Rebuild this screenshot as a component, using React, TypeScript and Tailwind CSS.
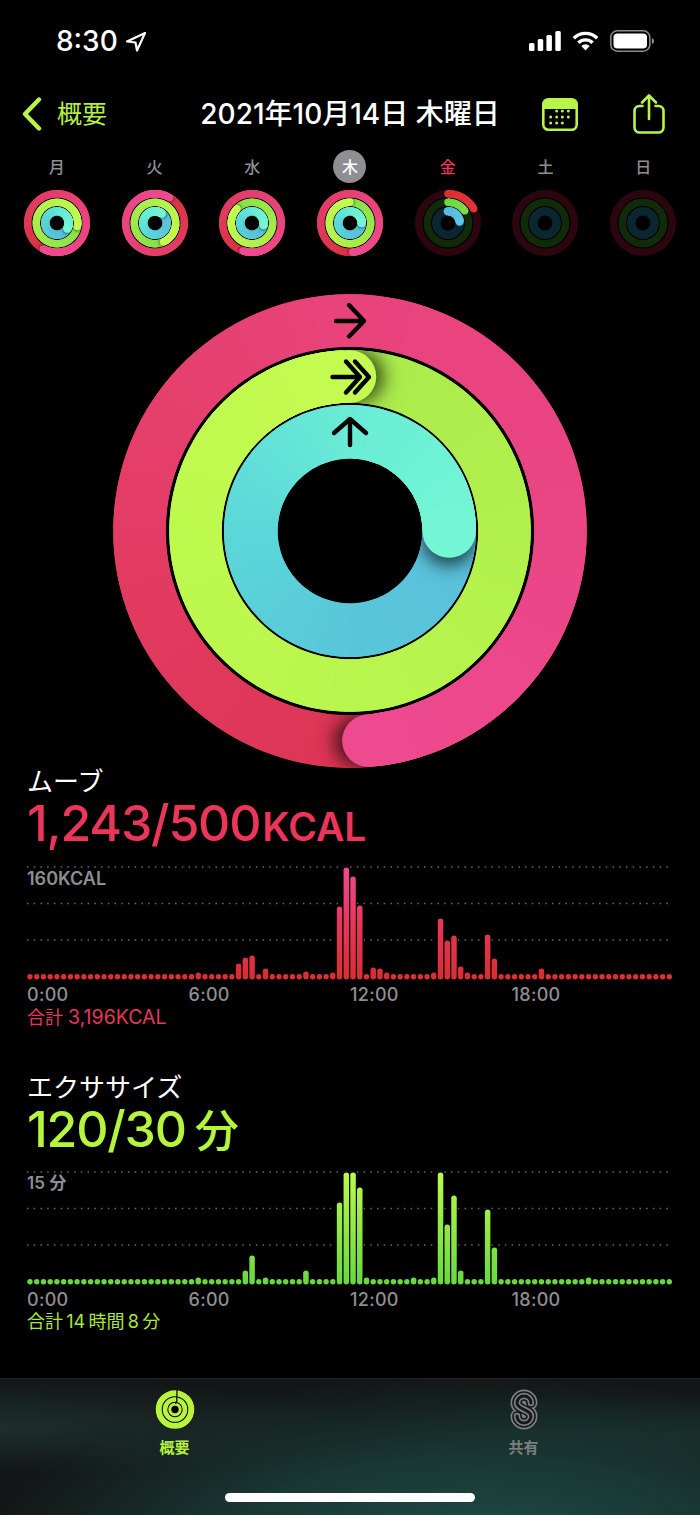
import React, { useId } from "react";

type Stop = [number, string];
type RingDef = { r: number; w: number; head: number; loop: boolean; stops: Stop[]; base: string };

const hex = (c: string) => [1, 3, 5].map((i) => parseInt(c.slice(i, i + 2), 16));
function mix(stops: Stop[], t: number) {
  for (let i = 1; i < stops.length; i++) {
    if (t <= stops[i][0]) {
      const [t0, c0] = stops[i - 1];
      const [t1, c1] = stops[i];
      const k = (t - t0) / (t1 - t0 || 1);
      const a = hex(c0);
      const b = hex(c1);
      return `rgb(${a.map((v, j) => Math.round(v + (b[j] - v) * k)).join(",")})`;
    }
  }
  return stops[stops.length - 1][1];
}
const pt = (c: number, r: number, deg: number) => {
  const a = (deg * Math.PI) / 180;
  return [c + r * Math.sin(a), c - r * Math.cos(a)];
};
function arc(c: number, r: number, a0: number, a1: number) {
  const [x0, y0] = pt(c, r, a0);
  const [x1, y1] = pt(c, r, a1);
  return `M${x0.toFixed(2)} ${y0.toFixed(2)}A${r} ${r} 0 0 1 ${x1.toFixed(2)} ${y1.toFixed(2)}`;
}

function RingTrack({ c, ring, id, step, shade }: { c: number; ring: RingDef; id: string; step: number; shade: number }) {
  const { r, w, head, loop, stops, base } = ring;
  const span = loop ? 360 : head;
  const segs: { a0: number; a1: number; color: string; t: number }[] = [];
  if (span > 0) {
    const n = Math.ceil(span / step);
    const stepDeg = span / n;
    for (let i = n - 1; i >= 0; i--) {
      const t0 = i / n;
      const t1 = (i + 1) / n;
      const overlap = i === n - 1 ? 0 : stepDeg;
      segs.push({
        a0: head - t1 * span - overlap,
        a1: head - t0 * span,
        color: mix(stops, (t0 + t1) / 2),
        t: t0,
      });
    }
  }
  const [hx, hy] = pt(c, r, head);
  const [sx, sy] = pt(c, r, head + ((w * 0.15) / r) * (180 / Math.PI));
  const [tx, ty] = pt(c, r, 0);
  const draw = (list: typeof segs, k: string) =>
    list.map((s, i) => <path key={k + i} d={arc(c, r, s.a0, s.a1)} stroke={s.color} strokeWidth={w} fill="none" />);
  return (
    <g>
      {!loop && <circle cx={c} cy={c} r={r} fill="none" stroke={base} strokeWidth={w} />}
      {draw(segs, "a")}
      {loop && (
        <>
          <mask id={id} maskUnits="userSpaceOnUse" x="0" y="0" width={c * 2} height={c * 2}>
            <circle cx={c} cy={c} r={r} fill="none" stroke="#fff" strokeWidth={w} />
          </mask>
          <filter id={id + "b"} x="-60%" y="-60%" width="220%" height="220%">
            <feGaussianBlur stdDeviation={w * 0.16} />
          </filter>
          <g mask={`url(#${id})`}>
            <circle cx={sx} cy={sy} r={w / 2} fill="#000" fillOpacity={shade} filter={`url(#${id}b)`} />
          </g>
          {draw(segs.filter((s) => s.t < 0.16), "b")}
        </>
      )}
      {span > 0 && !loop && <circle cx={tx} cy={ty} r={w / 2} fill={stops[stops.length - 1][1]} />}
      {span > 0 && <circle cx={hx} cy={hy} r={w / 2} fill={stops[0][1]} />}
    </g>
  );
}

const PINK: Stop[] = [[0, "#ee4a90"], [0.25, "#ea4584"], [0.5, "#e8437a"], [0.75, "#e33c63"], [1, "#dc3452"]];
const PINK_MINI: Stop[] = [[0, "#ee4a90"], [0.4, "#e8437a"], [0.75, "#e03a5c"], [1, "#d9323f"]];
const LIME: Stop[] = [[0, "#c4fb50"], [0.25, "#bef94e"], [0.5, "#b9f64d"], [0.75, "#b2f04c"], [1, "#a9ea4b"]];
const LIME_MINI: Stop[] = [[0, "#c4fb50"], [0.4, "#b2f04c"], [1, "#86de48"]];
const AQUA: Stop[] = [[0, "#74f6d4"], [0.25, "#69ebd6"], [0.5, "#5bd7d9"], [0.75, "#58c6d9"], [1, "#5bc0dc"]];

function BigRings() {
  const id = useId().replace(/[^a-zA-Z0-9]/g, "");
  const c = 237;
  return (
    <svg viewBox="0 0 474 474" className="block w-[474px] h-[474px]">
      <RingTrack c={c} id={id + "p"} step={2} shade={0.65} ring={{ r: 210.5, w: 52.5, head: 175, loop: true, stops: PINK, base: "#000" }} />
      <RingTrack c={c} id={id + "g"} step={2} shade={0.65} ring={{ r: 154.5, w: 52.5, head: 0, loop: true, stops: LIME, base: "#000" }} />
      <RingTrack c={c} id={id + "b"} step={2} shade={0.65} ring={{ r: 99.2, w: 53.6, head: 90, loop: true, stops: AQUA, base: "#000" }} />
      <g stroke="#000" strokeWidth="4.4" strokeLinecap="round" strokeLinejoin="round" fill="none">
        <path d="M223 27H250M236 11L251 27L236 42.500" />
        <path d="M219.500 83H246M233 67.500L247 83L233 98.500M242 67.500L256 83L242 98.500" />
        <path d="M237 151V125M221 139L237 125L253 139" />
      </g>
    </svg>
  );
}

function MiniRing({ p, g, b }: { p: number | null; g: number | null; b: number | null }) {
  const id = useId().replace(/[^a-zA-Z0-9]/g, "");
  const c = 33;
  const dim = p === null;
  const pLoop = !dim && p! > 100;
  const gLoop = !dim && g! > 80 && !(p! < 100);
  const bLoop = !dim && b! > 0 && !(p! < 100);
  return (
    <svg viewBox="0 0 66 66" className="block w-[66px] h-[66px]">
      <RingTrack c={c} id={id + "p"} step={4} shade={0.4} ring={{ r: 29.3, w: 7.4, head: p ?? 0, loop: pLoop, stops: pLoop ? PINK_MINI : [[0, "#df3438"], [1, "#d92f33"]], base: "#2c060e" }} />
      <RingTrack c={c} id={id + "g"} step={4} shade={0.4} ring={{ r: 20.7, w: 7.4, head: g ?? 0, loop: gLoop, stops: gLoop ? LIME_MINI : [[0, "#78de4a"], [1, "#6fd945"]], base: "#112a0a" }} />
      <RingTrack c={c} id={id + "b"} step={4} shade={0.4} ring={{ r: 11.7, w: 8.6, head: b ?? 0, loop: bLoop, stops: bLoop ? AQUA : [[0, "#5cc4e4"], [1, "#58bce0"]], base: "#0a2730" }} />
    </svg>
  );
}

const WEEK: { d: string; p: number | null; g: number | null; b: number | null }[] = [
  { d: "月", p: 208, g: 100, b: 118 },
  { d: "火", p: 390, g: 156, b: 35 },
  { d: "水", p: 198, g: 314, b: 100 },
  { d: "木", p: 175, g: 360, b: 90 },
  { d: "金", p: 61, g: 54, b: 82 },
  { d: "土", p: null, g: null, b: null },
  { d: "日", p: null, g: null, b: null },
];

function Chart({ data, stops, tint }: { data: Record<number, number>; stops: [string, string, string]; tint: string }) {
  const gid = useId().replace(/[^a-zA-Z0-9]/g, "");
  return (
    <svg viewBox="0 0 645 116" className="block w-[645px] h-[116px]">
      <defs>
        <linearGradient id={gid} gradientUnits="userSpaceOnUse" x1="0" y1="113.500" x2="0" y2="1">
          <stop offset="0" stopColor={stops[0]} />
          <stop offset="0.5" stopColor={stops[1]} />
          <stop offset="1" stopColor={stops[2]} />
        </linearGradient>
      </defs>
      {[1, 37.5, 74].map((y) => (
        <line key={y} x1="0" x2="645" y1={y} y2={y} stroke="#6a6a6e" strokeWidth="1.500" strokeDasharray="1.500 5.230" />
      ))}
      {Array.from({ length: 96 }, (_, i) => {
        const h = data[i];
        const cx = 3 + 6.73 * i;
        if (!h) return <circle key={i} cx={cx} cy={110.8} r={2.7} fill={tint} />;
        return (
          <g key={i}>
            <rect x={cx - 3.75} y={113.5 - h - 1} width={7.5} height={h + 1} fill="#000" />
            <rect x={cx - 2.75} y={113.5 - h} width={5.5} height={h} rx={2.75} fill={`url(#${gid})`} />
          </g>
        );
      })}
    </svg>
  );
}

const MOVE: Record<number, number> = {
  25: 7, 31: 16, 32: 22, 33: 24, 35: 11, 41: 8, 45: 7, 46: 73, 47: 112, 48: 103, 49: 74, 51: 12, 52: 11, 53: 7,
  60: 7, 61: 61, 62: 39, 63: 44, 64: 13, 65: 7, 68: 45, 69: 21, 76: 11,
};
const EXERCISE: Record<number, number> = {
  25: 7, 32: 14, 33: 29, 35: 7, 41: 14, 46: 82, 47: 112, 48: 112, 49: 97, 50: 7, 57: 7, 60: 7, 61: 112, 62: 60,
  63: 89, 64: 14, 68: 75, 69: 37, 83: 7,
};

function Axis() {
  return (
    <div className="grid grid-cols-4 w-[646px] mt-[2px] text-[18px] leading-[22px] font-medium tracking-[0.3px] text-[#8e8e93]">
      <span>0:00</span>
      <span>6:00</span>
      <span>12:00</span>
      <span>18:00</span>
    </div>
  );
}

const FONT = "[font-family:Inter,'Noto_Sans_CJK_JP',sans-serif]";

export default function App() {
  return (
    <div className={`flex flex-col w-[700px] h-[1515px] overflow-hidden bg-black text-white ${FONT}`}>
      <div className="flex items-center justify-between h-[82px] pl-[56px] pr-[46px]">
        <div className="flex items-center gap-[7px]">
          <span className="text-[28px] leading-none font-medium">8:30</span>
          <svg viewBox="0 0 22 21" className="w-[22px] h-[21px]">
            <path d="M20 2L2 10.500L10.500 11.500L12 19.500Z" fill="none" stroke="#fff" strokeWidth="2.200" strokeLinejoin="round" />
          </svg>
        </div>
        <div className="flex items-center">
          <svg viewBox="0 0 32 20" className="w-[32px] h-[20px]">
            <rect x="0" y="12" width="5.500" height="8" rx="1.500" fill="#fff" />
            <rect x="8.700" y="8" width="5.500" height="12" rx="1.500" fill="#fff" />
            <rect x="17.400" y="4" width="5.500" height="16" rx="1.500" fill="#fff" />
            <rect x="26.300" y="0" width="5.500" height="20" rx="1.500" fill="#fff" />
          </svg>
          <svg viewBox="0 0 27 20" className="w-[27px] h-[20px] ml-[11px]">
            <path d="M1.800 7.200A16.500 16.500 0 0 1 25.200 7.200" fill="none" stroke="#fff" strokeWidth="3.400" />
            <path d="M6.400 11.800A10 10 0 0 1 20.600 11.800" fill="none" stroke="#fff" strokeWidth="3.400" />
            <path d="M13.500 19.500L9.300 15A6 6 0 0 1 17.700 15Z" fill="#fff" />
          </svg>
          <svg viewBox="0 0 44 22" className="w-[44px] h-[22px] ml-[11px]">
            <rect x="0.800" y="0.800" width="39" height="20.400" rx="6.500" fill="none" stroke="#8c8c8c" strokeWidth="1.500" />
            <rect x="3.500" y="3.500" width="33.500" height="15" rx="4" fill="#fff" />
            <path d="M41.800 8V14C43.200 13.500 44 12.500 44 11C44 9.500 43.200 8.500 41.800 8Z" fill="#8c8c8c" />
          </svg>
        </div>
      </div>

      <div className="flex items-center h-[64px]">
        <div className="flex items-center w-[200px] pl-[22px]">
          <svg viewBox="0 0 20 34" className="w-[20px] h-[34px]">
            <path d="M17 2.500L3 17L17 31.500" fill="none" stroke="#b8f44a" strokeWidth="4.400" strokeLinecap="round" strokeLinejoin="round" />
          </svg>
          <span className="ml-[15px] text-[25px] leading-none text-[#b4ee45]">概要</span>
        </div>
        <div className="w-[300px] text-center whitespace-nowrap text-[28px] leading-none font-medium">2021年10月14日 木曜日</div>
        <div className="flex items-center w-[200px] pl-[42px]">
          <svg viewBox="0 0 36 33" className="w-[36px] h-[33px]">
            <rect x="1.300" y="1.300" width="33.400" height="30.400" rx="5" fill="none" stroke="#b8f44a" strokeWidth="2.600" />
            <path d="M1.300 11V6.300A5 5 0 0 1 6.300 1.300H29.700A5 5 0 0 1 34.700 6.300V11Z" fill="#b8f44a" />
            {[[14.700, 13], [20.300, 13], [26.300, 13], [8.700, 19], [14.700, 19], [20.300, 19], [26.300, 19], [8.700, 25], [14.700, 25], [20.300, 25]].map(([x, y]) => (
              <circle key={`${x}-${y}`} cx={x} cy={y} r="1.500" fill="#b8f44a" />
            ))}
          </svg>
          <svg viewBox="0 0 32 40" className="w-[32px] h-[40px] ml-[55px]">
            <path d="M9.500 12H6.500A5 5 0 0 0 1.500 17V33.500A5 5 0 0 0 6.500 38.500H25.500A5 5 0 0 0 30.500 33.500V17A5 5 0 0 0 25.500 12H22.500" fill="none" stroke="#b8f44a" strokeWidth="2.600" strokeLinecap="round" />
            <path d="M16 25V2M9 8.500L16 1.500L23 8.500" fill="none" stroke="#b8f44a" strokeWidth="2.600" strokeLinecap="round" strokeLinejoin="round" />
          </svg>
        </div>
      </div>

      <div className="grid grid-cols-7 w-[684px] ml-[8px] mt-[4px]">
        {WEEK.map((w) => (
          <div key={w.d} className="flex flex-col items-center">
            <div
              className={`flex items-center justify-center w-[33px] h-[33px] rounded-full text-[16px] font-medium ${
                w.d === "木" ? "bg-[#8e8e93] text-white" : w.d === "金" ? "text-[#ec3558]" : "text-[#8e8e93]"
              }`}
            >
              {w.d}
            </div>
            <div className="mt-[7px]">
              <MiniRing p={w.p} g={w.g} b={w.b} />
            </div>
          </div>
        ))}
      </div>

      <div className="flex justify-center mt-[38px]">
        <BigRings />
      </div>

      <section className="pl-[27px]">
        <div className="text-[26px] leading-[28px] h-[28px]">ムーブ</div>
        <div className="flex items-baseline h-[54px] leading-[54px] font-medium text-[#eb3559]">
          <span className="text-[50px] tracking-[-1.2px]">1,243/500</span>
          <span className="text-[39px] font-semibold ml-[2px]">KCAL</span>
        </div>
        <div className="relative mt-[16px] w-[645px]">
          <Chart data={MOVE} stops={["#d92d2f", "#e8355c", "#ee4a90"]} tint="#df2f2f" />
          <span className="absolute left-0 top-[2px] text-[18px] leading-[22px] font-semibold text-[#8e8e93]">160KCAL</span>
        </div>
        <Axis />
        <div className="text-[18px] leading-[22px] text-[#e8365a]">
          合計 <span className="text-[19.5px]">3,196KCAL</span>
        </div>
      </section>

      <section className="pl-[27px] mt-[45px]">
        <div className="text-[26px] leading-[28px] h-[28px]">エクササイズ</div>
        <div className="flex items-baseline h-[54px] leading-[54px] font-medium text-[#b6f53e]">
          <span className="text-[50px] tracking-[-1.2px]">120/30</span>
          <span className="text-[44px] ml-[9px]">分</span>
        </div>
        <div className="relative mt-[15px] w-[645px]">
          <Chart data={EXERCISE} stops={["#68d840", "#90e845", "#bdfb4c"]} tint="#66d93c" />
          <span className="absolute left-0 top-[1px] text-[17px] leading-[22px] font-semibold text-[#8e8e93]">15 分</span>
        </div>
        <Axis />
        <div className="text-[18px] leading-[22px] text-[#a8e83c]">合計{"\u2009"}14{"\u2009"}時間{"\u2009"}8{"\u2009"}分</div>
      </section>

      <div className="mt-auto flex flex-col justify-between h-[137px] border-t border-[#1e2222] bg-[#131616] bg-[radial-gradient(ellipse_at_68%_115%,#1f4a44_0%,#193733_35%,transparent_72%),radial-gradient(ellipse_at_0%_35%,#1c2f2c_0%,transparent_38%),radial-gradient(ellipse_at_100%_40%,#182825_0%,transparent_35%)]">
        <div className="grid grid-cols-2 pt-[10px] pr-[2px]">
          <div className="flex flex-col items-center">
            <svg viewBox="0 0 40 41" className="w-[40px] h-[41px]">
              <circle cx="20" cy="20.500" r="19.500" fill="#000" />
              <circle cx="20" cy="20.500" r="16.300" fill="none" stroke="#b8f43c" strokeWidth="6" />
              <circle cx="20" cy="20.500" r="10" fill="none" stroke="#b8f43c" strokeWidth="4.600" />
              <circle cx="20" cy="20.500" r="5.200" fill="none" stroke="#b8f43c" strokeWidth="3" />
              <path d="M22 1C22.500 5 21 8 22 11.500C21.500 13 21 14 20.500 15" fill="none" stroke="#000" strokeWidth="1.200" />
            </svg>
            <span className="mt-[8px] text-[15px] leading-[20px] font-bold text-[#b4ee3e]">概要</span>
          </div>
          <div className="flex flex-col items-center">
            <svg viewBox="0 0 28 41" className="w-[28px] h-[41px]">
              {[[13, "#7c7f7f"], [9.6, "#151818"], [6.4, "#7c7f7f"], [3, "#151818"]].map(([w, c]) => (
                <path key={w as number} d="M21 14A7 7 0 0 0 7 14C7 20.500 21 20.500 21 27A7 7 0 0 1 7 27" fill="none" stroke={c as string} strokeWidth={w as number} strokeLinecap="round" />
              ))}
            </svg>
            <span className="mt-[8px] text-[15px] leading-[20px] font-bold text-[#7c7f7f]">共有</span>
          </div>
        </div>
        <div className="w-[250px] h-[9px] mx-auto mb-[13px] rounded-full bg-white" />
      </div>
    </div>
  );
}
